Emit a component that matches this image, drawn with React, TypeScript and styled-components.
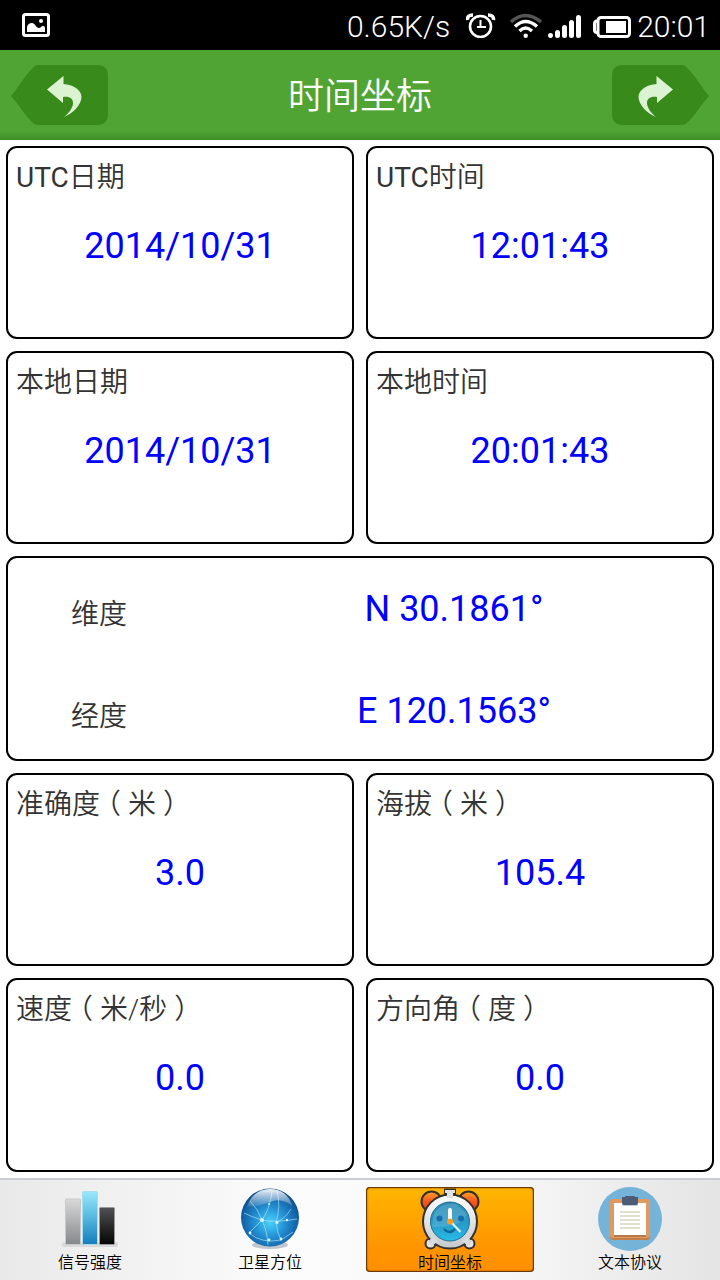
import React from 'react';
import styled, { createGlobalStyle } from 'styled-components';

const GlobalStyle = createGlobalStyle`
  *, *::before, *::after { box-sizing: border-box; }
  body {
    margin: 0;
    background: #fff;
    font-family: Roboto, 'Noto Sans CJK SC', sans-serif;
  }
`;

const Page = styled.div`
  display: flex;
  flex-direction: column;
  min-height: 100vh;
`;

const StatusBar = styled.div`
  display: flex;
  align-items: center;
  justify-content: space-between;
  height: 50px;
  padding: 0 10px 0 22px;
  background: #000;
  color: #fff;
  font: 300 30px/50px Roboto, sans-serif;
`;

const StatusGroup = styled.div`
  display: flex;
  align-items: center;
`;

const Rate = styled.span`
  margin-right: 16px;
  padding-top: 4px;
`;

const Clock = styled.time`
  margin-left: 5px;
  padding-top: 4px;
`;

const Header = styled.header`
  display: flex;
  align-items: center;
  justify-content: space-between;
  height: 90px;
  padding: 0 11px;
  background: linear-gradient(#4fa434 0, #4fa434 80px, #3f8f27 100%);
`;

const Title = styled.h1`
  margin: 0;
  padding-top: 4px;
  color: #fff;
  font-size: 36px;
  font-weight: 350;
  line-height: 50px;
`;

const ArrowButton = styled.button<{ $flip?: boolean }>`
  display: block;
  padding: 0;
  border: 0;
  background: none;
  transform: ${(p) => (p.$flip ? 'scaleX(-1)' : 'none')};
  svg { display: block; }
`;

const Main = styled.main`
  flex: 1;
  display: grid;
  grid-template-columns: 1fr 1fr;
  grid-template-rows: auto auto auto auto 1fr;
  gap: 12px;
  padding: 6px;
`;

const Card = styled.section`
  min-height: 193px;
  padding: 10px 8px 8px;
  border: 2px solid #000;
  border-radius: 11px;
  background: #fff;
`;

const Label = styled.h2`
  margin: 0;
  color: #333;
  font-size: 28px;
  font-weight: 350;
  line-height: 40px;
`;

const Latin = styled.span`
  font-weight: 400;
`;

/* Half-width form of the bracket, with even space on both sides. */
const Bracket = styled.span`
  padding: 0 7px;
  font-feature-settings: 'halt';
`;

const Value = styled.p`
  margin: 0;
  color: #00f;
  font-size: 36px;
  line-height: 44px;
  text-align: center;
`;

const CardValue = styled(Value)`
  margin-top: 26px;
`;

const WideCard = styled.section`
  grid-column: 1 / -1;
  display: flex;
  flex-direction: column;
  gap: 54px;
  min-height: 205px;
  padding-top: 29px;
  border: 2px solid #000;
  border-radius: 11px;
`;

const CoordRow = styled.div`
  display: grid;
  grid-template-columns: 170px 1fr;
  gap: 12px;
  padding-left: 6px;
`;

const CoordLabel = styled(Label)`
  padding-top: 8px;
  text-align: center;
`;

const TabBar = styled.nav`
  display: grid;
  grid-template-columns: repeat(4, 1fr);
  gap: 12px;
  padding: 7px 6px 8px;
  border-top: 2px solid #c8ccd0;
  background: linear-gradient(90deg, #e9e9e9, #fcfcfc 40%, #f7f7f7 70%, #e4e4e4);
`;

const Tab = styled.a<{ $active?: boolean }>`
  display: flex;
  flex-direction: column;
  align-items: center;
  height: 85px;
  border-radius: 4px;
  color: #000;
  font-size: 16px;
  font-weight: 350;
  line-height: 24px;
  text-decoration: none;
  background: ${(p) => (p.$active ? 'linear-gradient(#ffb600, #ff9500 70%, #ff9000)' : 'none')};
  box-shadow: ${(p) => (p.$active ? 'inset 0 0 0 1px #6b3a08, inset 0 0 2px 1px #8a4a00' : 'none')};
  svg { display: block; flex: none; }
`;

const ArrowShape = () => (
  <svg width="97" height="60" viewBox="0 0 97 60" aria-hidden="true">
    <path d="M0 31C6 25 14 9 24 1Q25 0 28 0H86Q97 0 97 11V49Q97 60 86 60H27Q24 60 22 58C14 51 7 38 0 31Z" fill="#388a1b" />
    <path d="M36 24.5 52.5 11V19C62 19.500 70.500 25 70.500 32C70.500 40 61 49 53 52C59 47 62 42 62 38C62 33 58 31 52 32V38Z" fill="#dcf3d2" />
  </svg>
);

const GalleryIcon = () => (
  <svg width="28" height="24" viewBox="0 0 28 24" aria-hidden="true">
    <rect x="1.500" y="1.500" width="25" height="21" rx="2" fill="none" stroke="#fff" strokeWidth="3" />
    <path d="M5 19V14Q6 10 10 10C13 10 14 15 17 15C19 15 19 13 21 13Q23 13 23 15V19Z" fill="#fff" />
    <circle cx="19" cy="8" r="2" fill="#fff" />
  </svg>
);

const StatusIcons = () => (
  <svg width="166" height="26" viewBox="466 12 166 26" fill="none" stroke="#fff" aria-hidden="true">
    <circle cx="480.500" cy="26.500" r="10.500" strokeWidth="2.600" />
    <path d="M480.500 20V27H486M477 27H481" strokeWidth="2" />
    <path d="M467.500 20Q467 15 473 15M493.500 20Q494 15 488 15" strokeWidth="3.600" />
    <path d="M511 22Q525.500 9 541 22" stroke="#555" strokeWidth="3.500" />
    <path d="M515 26.500Q525.500 16.500 537 26.500M519.500 31Q525.500 25 532 31" strokeWidth="3.500" />
    <circle cx="525.700" cy="35.800" r="2.200" fill="#fff" stroke="none" />
    <path d="M550.500 35.500V35.600M557.500 32.500V35.500M564.500 27.500V35.500M571.500 22.500V35.500M578.500 17.500V35.500" strokeWidth="5" strokeLinecap="round" />
    <rect x="598" y="17.500" width="31.500" height="19" rx="3" strokeWidth="3" />
    <path d="M597 21Q594.500 21 594.500 24V30Q594.500 32.500 597 32.500" strokeWidth="3" />
    <rect x="606" y="21" width="20" height="12" fill="#fff" stroke="none" />
  </svg>
);

const BarsIcon = () => (
  <svg width="64" height="64" viewBox="0 0 64 64" aria-hidden="true">
    <defs>
      <linearGradient id="barGrey" x2="0" y2="1"><stop stopColor="#d9d9d9" /><stop offset="1" stopColor="#85878a" /></linearGradient>
      <linearGradient id="barBlue" x2="0" y2="1"><stop stopColor="#98e8fa" /><stop offset=".45" stopColor="#5bbce2" /><stop offset="1" stopColor="#147dba" /></linearGradient>
      <linearGradient id="barBlack" x2="0" y2="1"><stop stopColor="#505153" /><stop offset="1" stopColor="#040404" /></linearGradient>
    </defs>
    <rect x="4" y="55" width="56" height="5" rx="2" fill="#dadada" />
    <rect x="7.500" y="12" width="15" height="45.500" rx="1" fill="url(#barGrey)" stroke="#c9c9c9" />
    <rect x="24.500" y="4.500" width="15" height="53" rx="1" fill="url(#barBlue)" stroke="#a9dcec" />
    <rect x="41.500" y="20.500" width="15" height="37" rx="1" fill="url(#barBlack)" stroke="#999" />
  </svg>
);

const GlobeIcon = () => (
  <svg width="64" height="64" viewBox="0 0 64 64" aria-hidden="true">
    <defs>
      <radialGradient id="globe" cx=".5" cy=".58" r=".56">
        <stop stopColor="#4bd3fb" /><stop offset=".45" stopColor="#2592d5" /><stop offset=".85" stopColor="#1261a5" /><stop offset="1" stopColor="#0c4a86" />
      </radialGradient>
      <linearGradient id="gloss" x2="0" y2="1"><stop stopColor="#fff" stopOpacity=".95" /><stop offset="1" stopColor="#fff" stopOpacity=".08" /></linearGradient>
    </defs>
    <ellipse cx="32" cy="58" rx="18" ry="4" fill="#9aa4ac" opacity=".6" />
    <circle cx="32" cy="30.500" r="29" fill="url(#globe)" />
    <g fill="none" stroke="#b7ecff" strokeWidth="1" opacity=".6">
      <path d="M6 26Q14 30 24 33Q36 36 59 32M12 14Q20 22 24 33Q29 43 30 58M39 3Q43 20 38 35Q39 46 43 53M34 4Q32 22 24 33L11 46M11 46Q24 57 43 53L55 45M38 35Q46 33 53 22" />
    </g>
    <g fill="#dcf9ff"><circle cx="24" cy="33" r="2" /><circle cx="39" cy="35.500" r="1.500" /><circle cx="49" cy="33" r="1.200" /><circle cx="43" cy="52" r="1.400" /><circle cx="31" cy="53" r="1.400" /><circle cx="12" cy="46" r="1.400" /><circle cx="31" cy="17" r="1" /></g>
    <path d="M9 20Q15 2 32 2T55 20Q44 10 32 15T9 20Z" fill="url(#gloss)" />
  </svg>
);

const AlarmIcon = () => (
  <svg width="64" height="64" viewBox="0 0 64 64" aria-hidden="true">
    <defs>
      <linearGradient id="bell" x2="0" y2="1"><stop stopColor="#ffa22c" /><stop offset=".5" stopColor="#f5571a" /><stop offset="1" stopColor="#ef3b10" /></linearGradient>
      <linearGradient id="rim" x2="0" y2="1"><stop stopColor="#fff" /><stop offset="1" stopColor="#c5c8cc" /></linearGradient>
      <linearGradient id="dial" x2="0" y2="1"><stop stopColor="#2b8ab4" /><stop offset=".55" stopColor="#279bc8" /><stop offset="1" stopColor="#28bce8" /></linearGradient>
    </defs>
    <g stroke="#33302e" strokeWidth="2">
      <circle cx="13.500" cy="14.500" r="10" fill="url(#bell)" />
      <circle cx="50.500" cy="14.500" r="10" fill="url(#bell)" />
      <path d="M27 2.500H37V6H35V11H29V6H27Z" fill="#ddd" />
      <circle cx="12.500" cy="56.500" r="5" fill="#e4e4e4" />
      <circle cx="51.500" cy="56.500" r="5" fill="#e4e4e4" />
      <circle cx="32" cy="34.500" r="27" fill="url(#rim)" />
    </g>
    <path d="M27 3H37V6H35V11H29V6H27Z" fill="#dfe1e4" />
    <path d="M10 55 15 49 20 54 14 59ZM54 55 49 49 44 54 50 59Z" fill="#d8dadd" />
    <circle cx="32" cy="34.500" r="19.500" fill="url(#dial)" stroke="#1f6f92" />
    <path d="M16 27Q23 15 38 17L49 27Q47 34 38 37T14 40Z" fill="#fff" opacity=".14" />
    <circle cx="21.500" cy="31.500" r="3" fill="#176dab" /><circle cx="43" cy="31.500" r="3" fill="#176dab" />
    <path d="M26 42Q31 48 37 42" fill="none" stroke="#12679b" strokeWidth="2.500" />
    <path d="M32 34V23" stroke="#fff" strokeWidth="4" strokeLinecap="round" />
    <path d="M32 34 42.500 45" stroke="#e5f6fa" strokeWidth="2" />
    <circle cx="32" cy="34.500" r="3" fill="#ff9a1c" />
  </svg>
);

const ClipboardIcon = () => (
  <svg width="64" height="64" viewBox="0 0 64 64" aria-hidden="true">
    <circle cx="32" cy="32" r="32" fill="#76b3d8" />
    <rect x="12" y="13" width="40" height="40" rx="3" fill="#c37e4a" />
    <rect x="12" y="12" width="40" height="39" rx="3" fill="#e09a60" />
    <path d="M16 48H48V50H16Z" fill="#bb7848" />
    <path d="M16 16H48V48H16Z" fill="#fff" />
    <path d="M24 16H40V18Q40 19 39 19H25Q24 19 24 18Z" fill="#c9cdd2" />
    <path d="M24 10H27Q27 9 28 9H36Q37 9 37 10H40V16Q40 18 38 18H26Q24 18 24 16Z" fill="#4c5c76" />
    <path d="M22 25H42M22 29H42M22 33H42M22 37H42M22 41H42" stroke="#dfe0cf" strokeWidth="2" />
  </svg>
);

const withUnit = (name: string, unit: string) => (
  <>{name}<Bracket>（</Bracket>{unit}<Bracket>）</Bracket></>
);

const utc = (name: string) => <><Latin>UTC</Latin>{name}</>;

const Reading = ({ label, value }: { label: React.ReactNode; value: string }) => (
  <Card>
    <Label>{label}</Label>
    <CardValue>{value}</CardValue>
  </Card>
);

const tabs = [
  { name: '信号强度', icon: <BarsIcon /> },
  { name: '卫星方位', icon: <GlobeIcon /> },
  { name: '时间坐标', icon: <AlarmIcon />, active: true },
  { name: '文本协议', icon: <ClipboardIcon /> },
];

export default function App() {
  return (
    <Page lang="zh-CN">
      <GlobalStyle />
      <StatusBar>
        <GalleryIcon />
        <StatusGroup>
          <Rate>0.65K/s</Rate>
          <StatusIcons />
          <Clock>20:01</Clock>
        </StatusGroup>
      </StatusBar>
      <Header>
        <ArrowButton aria-label="上一页"><ArrowShape /></ArrowButton>
        <Title>时间坐标</Title>
        <ArrowButton $flip aria-label="下一页"><ArrowShape /></ArrowButton>
      </Header>
      <Main>
        <Reading label={utc('日期')} value="2014/10/31" />
        <Reading label={utc('时间')} value="12:01:43" />
        <Reading label="本地日期" value="2014/10/31" />
        <Reading label="本地时间" value="20:01:43" />
        <WideCard>
          <CoordRow>
            <CoordLabel>维度</CoordLabel>
            <Value>N 30.1861°</Value>
          </CoordRow>
          <CoordRow>
            <CoordLabel>经度</CoordLabel>
            <Value>E 120.1563°</Value>
          </CoordRow>
        </WideCard>
        <Reading label={withUnit('准确度', '米')} value="3.0" />
        <Reading label={withUnit('海拔', '米')} value="105.4" />
        <Reading label={withUnit('速度', '米/秒')} value="0.0" />
        <Reading label={withUnit('方向角', '度')} value="0.0" />
      </Main>
      <TabBar>
        {tabs.map((tab) => (
          <Tab key={tab.name} href="#" $active={tab.active} aria-current={tab.active ? 'page' : undefined}>
            {tab.icon}
            {tab.name}
          </Tab>
        ))}
      </TabBar>
    </Page>
  );
}
